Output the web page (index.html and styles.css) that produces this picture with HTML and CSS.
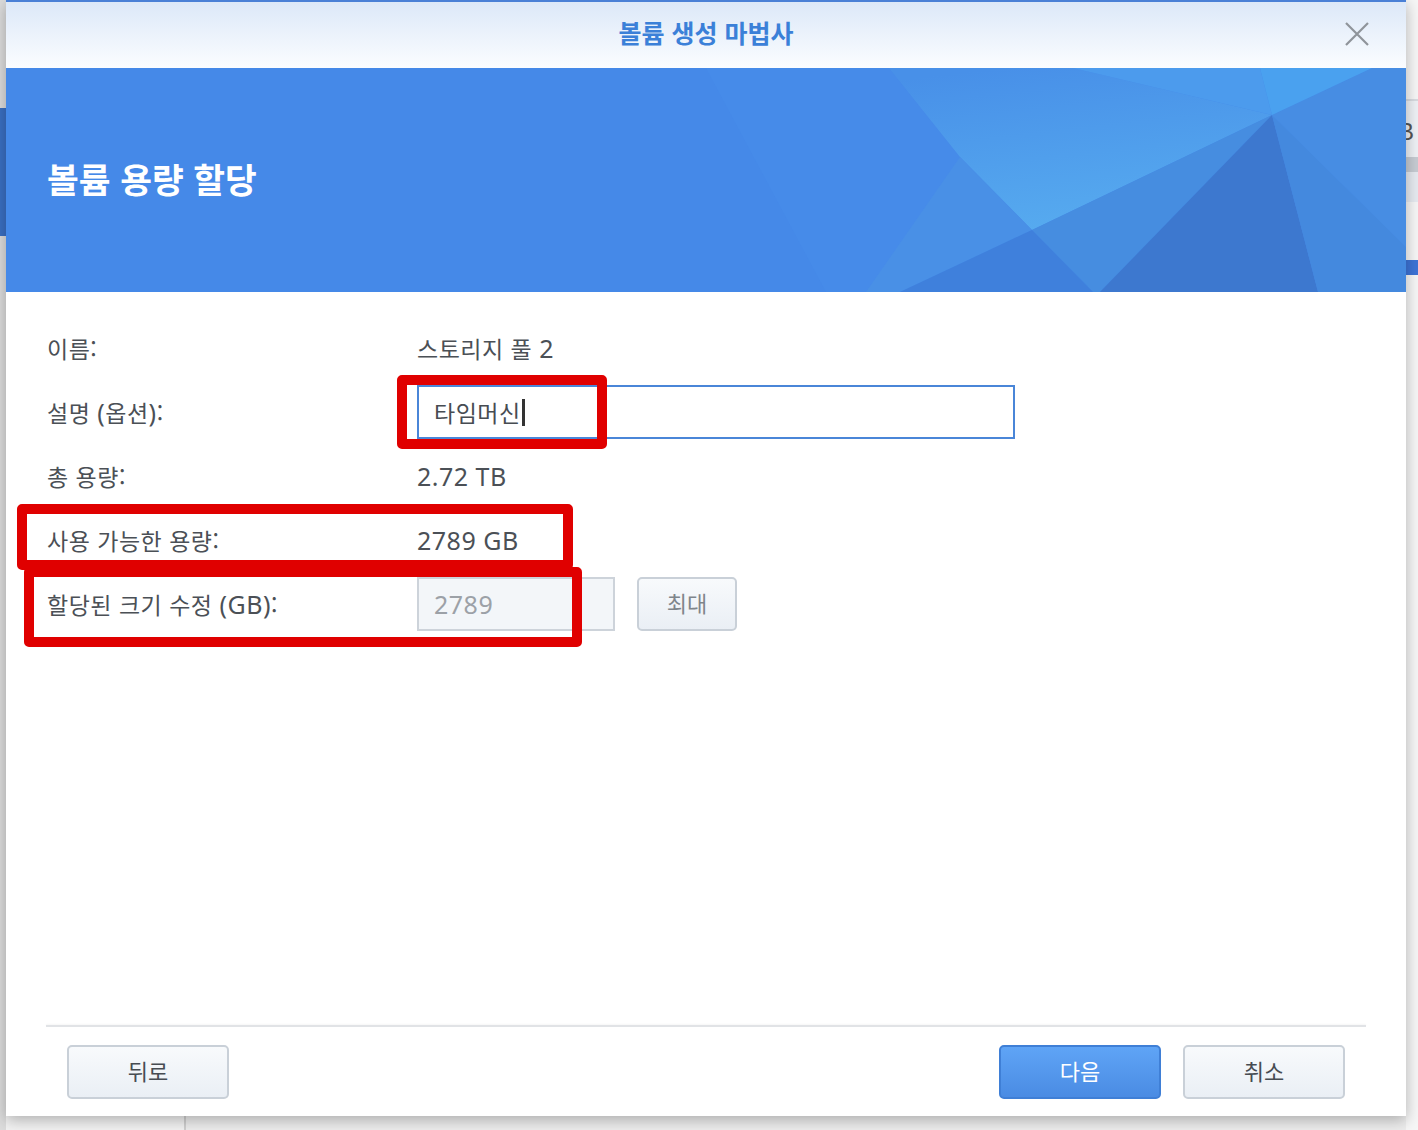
FILE: index.html
```html
<!DOCTYPE html>
<html lang="ko">
<head>
  <meta charset="UTF-8">
  <meta name="viewport" content="width=device-width, initial-scale=1.0">
  <title>볼륨 생성 마법사</title>
  <link rel="stylesheet" href="styles.css">
</head>
<body>
  <!-- Desktop behind the wizard -->
  <div class="desk">
    <div class="desk-left">
      <div class="desk-left-tab"></div>
    </div>
    <div class="desk-main">
      <div class="desk-col"></div>
    </div>
    <div class="desk-right">
      <div class="dr-line"></div>
      <div class="dr-text">B</div>
      <div class="dr-bar"></div>
      <div class="dr-row"></div>
      <div class="dr-sel"></div>
    </div>

    <!-- Wizard window -->
    <div class="wizard">
      <div class="wizard-title">
        <span>볼륨 생성 마법사</span>
        <svg class="close" width="26" height="26" viewBox="0 0 26 26">
          <path d="M2 2 L24 24 M24 2 L2 24" stroke="#8f949a" stroke-width="2.2" fill="none"/>
        </svg>
      </div>

      <div class="banner">
        <svg class="banner-art" viewBox="0 0 1400 224" preserveAspectRatio="none">
          <defs>
            <linearGradient id="lite" x1="0.3" y1="0" x2="0.55" y2="0.95">
              <stop offset="0" stop-color="#4890e8"/>
              <stop offset="1" stop-color="#56aaef"/>
            </linearGradient>
          </defs>
          <polygon points="700,0 883,0 954,89 894,224 820,224" fill="#468be9"/>
          <polygon points="883,0 1067,0 1266,47 1026,162 954,89" fill="url(#lite)"/>
          <polygon points="954,89 1026,162 894,224 860,224" fill="#4990e6"/>
          <polygon points="1026,162 1266,47 1094,224 1087,224" fill="#468de0"/>
          <polygon points="894,224 1026,162 1087,224" fill="#3f80dc"/>
          <polygon points="1266,47 1094,224 1312,224" fill="#3d78cf"/>
          <polygon points="1266,47 1312,224 1400,224 1400,179" fill="#4489de"/>
          <polygon points="1266,47 1400,179 1400,0 1366,0" fill="#478de3"/>
          <polygon points="1067,0 1254,0 1266,47" fill="#4c9bed"/>
          <polygon points="1254,0 1366,0 1266,47" fill="#4aa1ef"/>
        </svg>
        <h1>볼륨 용량 할당</h1>
      </div>

      <div class="form">
        <div class="row">
          <div class="label">이름:</div>
          <div class="value">스토리지 풀 <span class="en">2</span></div>
        </div>
        <div class="row">
          <div class="label">설명 <span class="en">(</span>옵션<span class="en">)</span>:</div>
          <div class="text-input focused">타임머신<span class="caret"></span></div>
        </div>
        <div class="row">
          <div class="label">총 용량:</div>
          <div class="value"><span class="en">2.72 TB</span></div>
        </div>
        <div class="row">
          <div class="label">사용 가능한 용량:</div>
          <div class="value"><span class="en">2789 GB</span></div>
        </div>
        <div class="row">
          <div class="label">할당된 크기 수정 <span class="en">(GB)</span>:</div>
          <div class="size-group">
            <div class="text-input size-input"><span class="en">2789</span></div>
            <button class="btn btn-small">최대</button>
          </div>
        </div>
      </div>

      <div class="wizard-footer">
        <div class="divider"></div>
        <div class="footer-buttons">
          <button class="btn">뒤로</button>
          <div class="spacer"></div>
          <button class="btn btn-primary">다음</button>
          <button class="btn">취소</button>
        </div>
      </div>

      <!-- Red annotation boxes -->
      <div class="mark mark-desc"></div>
      <div class="mark mark-avail"></div>
      <div class="mark mark-size"></div>
    </div>
  </div>
</body>
</html>
```

FILE: styles.css
```css
/* Base */
body {
  margin: 0;
  font-family: "Noto Sans CJK KR", "Noto Sans", sans-serif;
  background-color: #f4f4f4;
  color: #4b5056;
}

/* Latin runs are set a bit larger, as in the original UI */
.en {
  font-family: "Noto Sans", "Noto Sans CJK KR", sans-serif;
  font-size: 25px;
}

/* Desktop behind */
.desk {
  position: relative;
  display: flex;
  height: 1130px;
  overflow: hidden;
}

.desk-left {
  width: 6px;
  background-color: #dcdcdc;
  padding-top: 108px;
}

.desk-left-tab {
  height: 128px;
  background-color: #3a6fc2;
}

.desk-main {
  flex: 1;
  display: flex;
  background-color: #ededed;
}

.desk-col {
  width: 178px;
  border-right: 2px solid #cfcfcf;
  background-color: #f2f2f2;
}

.desk-right {
  width: 12px;
  background-color: #f6f6f6;
  padding-top: 99px;
}

.dr-line {
  height: 2px;
  background-color: #d8dbe0;
}

.dr-text {
  height: 56px;
  font-family: "Liberation Sans", sans-serif;
  font-size: 24px;
  line-height: 62px;
  color: #555;
  margin-left: -8px;
  background-color: #eef1f5;
}

.dr-bar {
  height: 15px;
  background-color: #c6cbd2;
}

.dr-row {
  height: 30px;
  margin-bottom: 58px;
  background-color: #e6eaf0;
}

.dr-sel {
  height: 15px;
  background-color: #3d73d6;
}

/* Wizard window */
.wizard {
  position: absolute;
  top: 0;
  left: 6px;
  width: 1400px;
  height: 1116px;
  display: flex;
  flex-direction: column;
  background-color: #ffffff;
  box-shadow: 0 4px 14px rgba(0, 0, 0, 0.28);
}

.wizard-title {
  position: relative;
  box-sizing: border-box;
  height: 68px;
  padding-bottom: 6px;
  border-top: 2px solid #4a80d6;
  background: linear-gradient(#dce8f8, #fbfdff);
  display: flex;
  align-items: center;
  justify-content: center;
  font-size: 25px;
  font-weight: bold;
  color: #3b80d8;
}

.close {
  position: absolute;
  right: 36px;
  top: 19px;
}

.banner {
  position: relative;
  height: 224px;
  background-color: #4589e8;
  display: flex;
  align-items: center;
  overflow: hidden;
}

.banner-art {
  position: absolute;
  top: 0;
  left: 0;
  width: 100%;
  height: 100%;
}

.banner h1 {
  position: relative;
  margin: 0 0 4px 41px;
  font-size: 34.5px;
  font-weight: bold;
  color: #ffffff;
}

/* Form rows */
.form {
  flex: 1;
  padding: 24px 0 0 41px;
}

.row {
  display: flex;
  align-items: center;
  height: 64px;
}

.label {
  width: 370px;
  font-size: 23px;
  letter-spacing: 0.5px;
}

.value {
  font-size: 23px;
  letter-spacing: 0.5px;
}

.text-input {
  box-sizing: border-box;
  height: 54px;
  width: 598px;
  border: 2px solid #4a86d8;
  padding: 0 15px;
  display: flex;
  align-items: center;
  font-size: 23px;
  letter-spacing: 0.5px;
  color: #474c52;
}

.caret {
  display: inline-block;
  width: 3px;
  height: 27px;
  margin-left: 1px;
  background-color: #333;
}

.size-group {
  display: flex;
  gap: 22px;
}

.size-input {
  width: 198px;
  border-color: #cdd3da;
  background-color: #f3f6f9;
  color: #9ca1a7;
}

/* Buttons */
.btn {
  box-sizing: border-box;
  width: 162px;
  height: 54px;
  padding-bottom: 5px;
  border: 2px solid #c9d0d8;
  border-radius: 5px;
  background: linear-gradient(#f8fafc, #eaeff5);
  font-family: inherit;
  font-size: 22px;
  color: #474c52;
}

.btn-small {
  width: 100px;
  color: #7f858b;
}

.btn-primary {
  border-color: #3f7fd6;
  background: linear-gradient(#5fa4f6, #4a8be3);
  color: #ffffff;
}

/* Footer */
.wizard-footer {
  height: 91px;
}

.divider {
  height: 2px;
  margin: 0 40px;
  background-color: #e1e3e6;
  box-shadow: 0 -1px 2px rgba(0, 0, 0, 0.04);
}

.footer-buttons {
  display: flex;
  gap: 22px;
  padding: 18px 61px 0;
}

.spacer {
  flex: 1;
}

/* Annotation marks */
.mark {
  position: absolute;
  border: 10px solid #e00000;
  border-radius: 5px;
  box-sizing: border-box;
}

.mark-desc {
  left: 391px;
  top: 375px;
  width: 210px;
  height: 74px;
}

.mark-avail {
  left: 11px;
  top: 504px;
  width: 556px;
  height: 66px;
}

.mark-size {
  left: 18px;
  top: 567px;
  width: 558px;
  height: 80px;
}
```
